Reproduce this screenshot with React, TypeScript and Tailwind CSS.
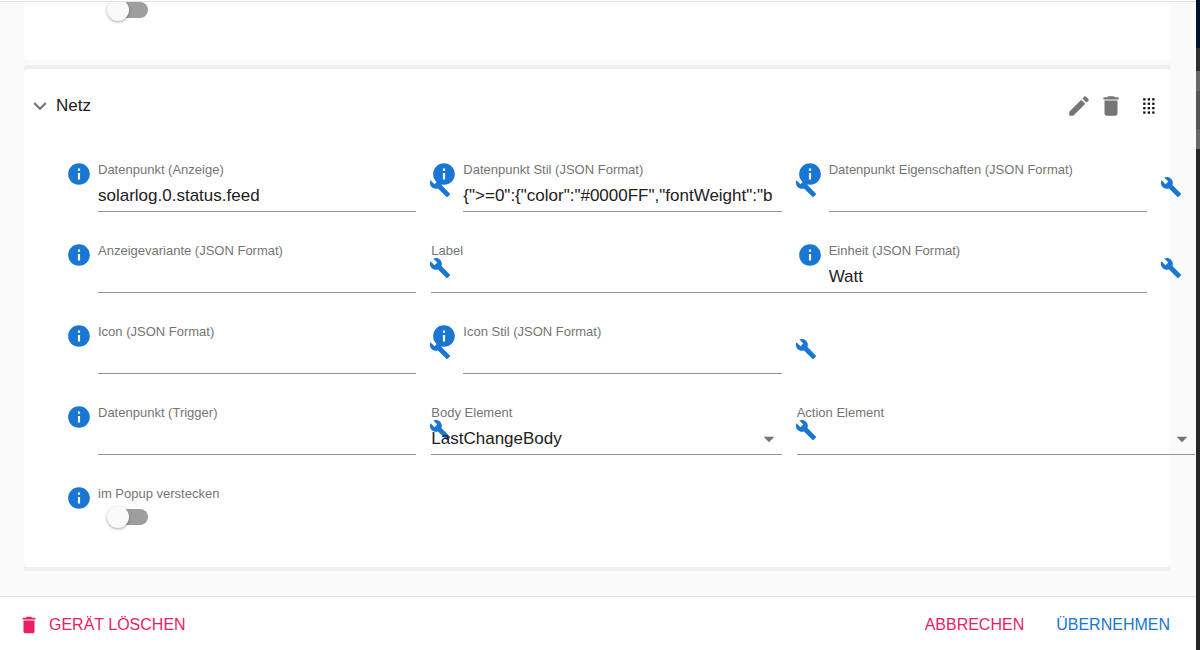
import React, { useId, useState } from 'react';
import { MdArrowDropDown, MdBuild, MdDelete, MdEdit, MdExpandMore, MdInfo } from 'react-icons/md';
import { clsx } from 'clsx';

interface FieldConfig {
  name: string;
  label: string;
  value?: string;
  type?: 'text' | 'select' | 'switch';
  info?: boolean;
  tool?: boolean;
  wide?: boolean; // runs past the column into the gutter
  newRow?: boolean;
}

const FIELDS: FieldConfig[] = [
  { name: 'datapoint', label: 'Datenpunkt (Anzeige)', value: 'solarlog.0.status.feed', info: true, tool: true },
  { name: 'datapointStyle', label: 'Datenpunkt Stil (JSON Format)', value: '{">=0":{"color":"#0000FF","fontWeight":"b', info: true, tool: true },
  { name: 'datapointProps', label: 'Datenpunkt Eigenschaften (JSON Format)', info: true, tool: true },
  { name: 'variant', label: 'Anzeigevariante (JSON Format)', info: true, tool: true },
  { name: 'label', label: 'Label', wide: true },
  { name: 'unit', label: 'Einheit (JSON Format)', value: 'Watt', info: true, tool: true },
  { name: 'icon', label: 'Icon (JSON Format)', info: true, tool: true },
  { name: 'iconStyle', label: 'Icon Stil (JSON Format)', info: true, tool: true },
  { name: 'trigger', label: 'Datenpunkt (Trigger)', info: true, tool: true, newRow: true },
  { name: 'body', label: 'Body Element', value: 'LastChangeBody', type: 'select', tool: true },
  { name: 'action', label: 'Action Element', type: 'select', wide: true },
  { name: 'hide', label: 'im Popup verstecken', type: 'switch', info: true, newRow: true },
];

const DOTS = [0, 1, 2, 3].flatMap(row => [0, 1, 2].map(col => ({ row, col })));

function Switch({ id, label }: { id: string; label?: string }) {
  const [on, setOn] = useState(false);
  return (
    <input
      id={id}
      type="checkbox"
      aria-label={label}
      checked={on}
      onChange={e => setOn(e.target.checked)}
      className="relative block h-4 w-[37px] appearance-none rounded-full bg-[#9e9e9e] before:absolute before:-left-1 before:-top-[3px] before:size-[22px] before:rounded-full before:bg-[#fafafa] before:shadow-[0_1px_3px_rgba(0,0,0,0.35)] checked:bg-[#8abaeb] checked:before:left-5 checked:before:bg-[#1976d2]"
    />
  );
}

function Field({ field }: { field: FieldConfig }) {
  const id = useId();
  const [value, setValue] = useState(field.value ?? '');
  const inputClass = 'block h-[31px] w-full border-b border-[#949494] bg-transparent text-[17px] text-[#212121] outline-none';

  return (
    <div className={clsx('relative flex', field.newRow && 'col-start-1', field.wide && '-mr-12')}>
      {field.info && <MdInfo size={26} className="mr-1.5 shrink-0 text-[#1976d2]" />}
      <div className="min-w-0 flex-1 pt-px">
        <label htmlFor={id} className="mb-[3px] block whitespace-nowrap text-[13px] leading-4 text-[#757575]">
          {field.label}
        </label>
        {field.type === 'switch' ? (
          <div className="ml-[13px] pt-1">
            <Switch id={id} />
          </div>
        ) : field.type === 'select' ? (
          <div className="relative">
            <select id={id} value={value} onChange={e => setValue(e.target.value)} className={clsx(inputClass, 'appearance-none')}>
              <option value=""></option>
              <option value="LastChangeBody">LastChangeBody</option>
            </select>
            <MdArrowDropDown size={26} className="pointer-events-none absolute right-0 top-0.5 text-[#757575]" />
          </div>
        ) : (
          <input id={id} type="text" value={value} onChange={e => setValue(e.target.value)} className={inputClass} />
        )}
      </div>
      {field.tool && (
        <button type="button" aria-label="Bearbeiten" className="absolute left-full top-[15px] ml-[13px] text-[#1976d2]">
          <MdBuild size={22} />
        </button>
      )}
    </div>
  );
}

function DeviceCard() {
  return (
    <section className="mt-[5px] bg-[#efefef] py-1">
      <div className="rounded bg-white pb-px">
        <div className="flex h-[74px] items-center pl-[3px] pr-[15px] text-[#757575]">
          <button type="button" aria-label="Einklappen">
            <MdExpandMore size={26} />
          </button>
          <h2 className="ml-[3px] flex-1 text-[17px] text-[#212121]">Netz</h2>
          <button type="button" aria-label="Umbenennen">
            <MdEdit size={26} />
          </button>
          <button type="button" aria-label="Entfernen" className="ml-1.5">
            <MdDelete size={26} />
          </button>
          <button type="button" aria-label="Verschieben" className="ml-[19px]">
            <svg width="12" height="16" viewBox="0 0 12 16" fill="#111">
              {DOTS.map(({ row, col }) => (
                <rect key={`${row}-${col}`} x={col * 4.5 + 0.2} y={row * 4.4 + 0.2} width="2.3" height="2.3" />
              ))}
            </svg>
          </button>
        </div>
        <div className="grid auto-rows-[81px] grid-cols-3 gap-x-[15px] pl-[42px] pr-[23px] pt-[18px]">
          {FIELDS.map(field => (
            <Field key={field.name} field={field} />
          ))}
        </div>
      </div>
    </section>
  );
}

export default function App() {
  return (
    <div className="flex h-screen bg-[#262626] font-['Liberation_Sans',Arial,sans-serif]">
      <div className="flex min-w-0 flex-1 flex-col bg-[#fafafa]">
        <header className="h-0.5 shrink-0 border-b border-[#e0e0e0] bg-white" />
        <main className="min-h-0 flex-1 overflow-hidden pl-6 pr-[26px]">
          <section className="bg-[#f8f8f8]">
            <div className="rounded-b bg-white pb-[42px] pl-[87px]">
              <Switch id="previous-hide" label="im Popup verstecken" />
            </div>
          </section>
          <DeviceCard />
        </main>
        <footer className="flex h-[54px] shrink-0 items-center border-t border-[#e0e0e0] bg-white pl-[18px] pr-[26px] pt-0.5 text-base">
          <button type="button" className="flex items-center gap-[9px] uppercase text-[#e91e63]">
            <MdDelete size={22} />
            Gerät löschen
          </button>
          <button type="button" className="ml-auto uppercase text-[#e91e63]">Abbrechen</button>
          <button type="button" className="ml-8 uppercase text-[#1976d2]">Übernehmen</button>
        </footer>
      </div>
      {/* strip of the page behind the dialog */}
      <div className="flex w-1 shrink-0 flex-col">
        <div className="h-12 bg-[#00152c]" />
        <div className="h-[23px] bg-[#2e2e2e]" />
        <div className="h-5 bg-[#666]" />
        <div className="h-[38px] bg-[#555]" />
        <div className="h-5 bg-[#666]" />
      </div>
    </div>
  );
}
